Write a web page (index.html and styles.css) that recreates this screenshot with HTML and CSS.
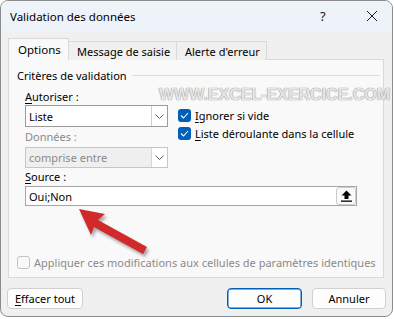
FILE: index.html
```html
<!DOCTYPE html>
<html lang="fr">
<head>
<meta charset="utf-8">
<title>Validation des données</title>
<link rel="stylesheet" href="styles.css">
</head>
<body>
<div class="window">
  <div class="titlebar">
    <span class="title">Validation des données</span>
    <span class="help">?</span>
    <svg class="close" width="12" height="12" viewBox="0 0 12 12"><path d="M1 1 L11 11 M11 1 L1 11" stroke="#1a1a1a" stroke-width="1" fill="none"/></svg>
  </div>
  <div class="body">
    <div class="tabs">
      <div class="tab active">Options</div>
      <div class="tab">Message de saisie</div>
      <div class="tab">Alerte d'erreur</div>
    </div>
    <div class="panel">
      <div class="group-head"><span>Critères de validation</span><span class="rule"></span></div>
      <div class="criteria">
        <div class="left-col">
          <div class="label"><u>A</u>utoriser :</div>
          <div class="select">
            <span class="select-text">Liste</span>
            <span class="select-btn"><svg width="9" height="5" viewBox="0 0 9 5"><path d="M0.5 0.5 L4.5 4.5 L8.5 0.5" stroke="#606060" fill="none" stroke-width="1"/></svg></span>
          </div>
          <div class="label disabled">Données :</div>
          <div class="select off">
            <span class="select-text">comprise entre</span>
            <span class="select-btn"><svg width="9" height="5" viewBox="0 0 9 5"><path d="M0.5 0.5 L4.5 4.5 L8.5 0.5" stroke="#606060" fill="none" stroke-width="1"/></svg></span>
          </div>
        </div>
        <div class="right-col">
          <div class="check-row"><span class="check on"><svg width="9" height="7" viewBox="0 0 9 7"><path d="M1 3.5 L3.5 6 L8 1" stroke="#fff" stroke-width="1.1" fill="none"/></svg></span><span><u>I</u>gnorer si vide</span></div>
          <div class="check-row"><span class="check on"><svg width="9" height="7" viewBox="0 0 9 7"><path d="M1 3.5 L3.5 6 L8 1" stroke="#fff" stroke-width="1.1" fill="none"/></svg></span><span><u>L</u>iste déroulante dans la cellule</span></div>
        </div>
      </div>
      <div class="label src-label"><u>S</u>ource :</div>
      <div class="source">
        <span class="source-text">Oui;Non</span>
        <span class="ref-btn"><svg width="11" height="12" viewBox="0 0 11 12"><path d="M5.5 0.5 L10.5 5.5 L7.5 5.5 L7.5 9 L3.5 9 L3.5 5.5 L0.5 5.5 Z" fill="#000"/><rect x="0" y="10.5" width="11" height="1.3" fill="#000"/></svg></span>
      </div>
      <div class="apply-row"><span class="check off"></span><span>Appliquer ces modifications aux cellules de paramètres identiques</span></div>
    </div>
    <div class="buttons">
      <button class="btn clear"><u>E</u>ffacer tout</button>
      <span class="spacer"></span>
      <button class="btn ok">OK</button>
      <button class="btn cancel">Annuler</button>
    </div>
  </div>
  <div class="watermark">WWW.EXCEL-EXERCICE.COM</div>
  <svg class="arrow" width="100" height="60" viewBox="0 0 100 60">
    <defs><filter id="sh" x="-20%" y="-20%" width="140%" height="160%"><feGaussianBlur stdDeviation="1.4"/></filter></defs>
    <g transform="translate(2,3)" filter="url(#sh)" opacity="0.45">
      <path d="M8 8 L34 13 L27 19 L76 46 L72 53 L23 26 L20 34 Z" fill="#444"/>
    </g>
    <path d="M8 8 L34 13 L27 19 L76 46 L72 53 L23 26 L20 34 Z" fill="#d22a2a"/>
  </svg>
</div>
</body>
</html>
```
FILE: styles.css
```css
* { box-sizing: border-box; }
html, body { margin: 0; padding: 0; background: #ffffff; }
body {
  width: 394px;
  height: 319px;
  font-family: "Noto Sans", "Open Sans", sans-serif;
  font-size: 11px;
  color: #000;
  white-space: nowrap;
}
u { text-decoration: underline; text-underline-offset: 2px; }
.window {
  position: relative;
  width: 393px;
  height: 317px;
  border: 1px solid #8c8c8c;
  border-radius: 8px;
  background: #f0f0f0;
  overflow: hidden;
  display: flex;
  flex-direction: column;
}
.titlebar {
  height: 30px;
  background: #eef3f9;
  display: flex;
  align-items: center;
  padding-left: 9px;
  flex: none;
}
.title { flex: 1; font-size: 11.5px; }
.help { width: 12px; margin-right: 34px; font-size: 13px; color: #1a1a1a; }
.close { margin-right: 14px; }
.body {
  flex: 1;
  padding: 7px 0 0 7px;
  display: flex;
  flex-direction: column;
}
.tabs {
  display: flex;
  align-items: flex-end;
  height: 22px;
  position: relative;
  z-index: 1;
}
.tab {
  height: 19px;
  border: 1px solid #d9d9d9;
  border-bottom: none;
  border-left: none;
  padding: 0 8px;
  display: flex;
  align-items: center;
  background: #f0f0f0;
  line-height: 1;
}
.tab.active {
  height: 22px;
  border-left: 1px solid #d9d9d9;
  background: #f9f9f9;
  padding: 0 9px 0 9px;
  width: 61px;
  font-size: 11.5px;
}
.tab:nth-child(2) { width: 108px; }
.tab:nth-child(3) { width: 90px; }
.panel {
  margin-top: -1px;
  width: 376px;
  height: 219px;
  border: 1px solid #d9d9d9;
  background: #f9f9f9;
  display: flex;
  flex-direction: column;
  padding: 7px 0 0 8px;
}
.group-head {
  height: 16px;
  display: flex;
  align-items: center;
}
.group-head .rule {
  flex: none;
  width: 248px;
  margin-left: 5px;
  height: 1px;
  background: #dddddd;
}
.criteria {
  display: flex;
  padding-left: 8px;
  margin-top: 6px;
}
.left-col { width: 143px; display: flex; flex-direction: column; }
.label { height: 16px; line-height: 16px; }
.label.disabled { color: #8a8a8a; margin-top: 2px; }
.select {
  height: 22px;
  border: 1px solid #9a9a9a;
  background: #ffffff;
  display: flex;
  align-items: stretch;
}
.select.off {
  height: 21px;
  margin-top: 2px;
  border-color: #c6c6c6;
  background: #efefef;
  color: #8a8a8a;
}
.select-text { flex: 1; padding-left: 3px; display: flex; align-items: center; }
.select-btn {
  width: 16px;
  border-left: 1px solid #cfcfcf;
  display: flex;
  align-items: center;
  justify-content: center;
  background: #ffffff;
}
.select.off .select-btn { border-left-color: #d6d6d6; }
.right-col { margin-left: 10px; padding-top: 17px; }
.check-row {
  height: 18px;
  display: flex;
  align-items: center;
  gap: 4px;
}
.check {
  width: 13px;
  height: 13px;
  border-radius: 3px;
  display: flex;
  align-items: center;
  justify-content: center;
  flex: none;
}
.check.on { background: #005fb8; }
.check.off { border: 1px solid #c2c2c2; background: #f9f9f9; }
.src-label { margin-left: 8px; margin-top: 1px; }
.source {
  margin-left: 8px;
  margin-top: 1px;
  width: 332px;
  height: 20px;
  border: 1px solid #a6a6a6;
  background: #ffffff;
  display: flex;
  align-items: center;
}
.source-text { flex: 1; padding-left: 3px; }
.ref-btn {
  width: 20px;
  height: 18px;
  border: 1px solid #cccccc;
  border-radius: 3px;
  background: #fafafa;
  display: flex;
  align-items: center;
  justify-content: center;
}
.apply-row {
  margin-top: auto;
  margin-bottom: 8px;
  display: flex;
  align-items: center;
  gap: 4px;
  color: #8a8a8a;
  height: 14px;
}
.buttons {
  display: flex;
  margin-top: 10px;
  padding-right: 6px;
}
.spacer { flex: 1; }
.btn {
  font-family: "Noto Sans", "Open Sans", sans-serif;
  font-size: 11px;
  height: 21px;
  border: 1px solid #d0d0d0;
  border-radius: 4px;
  background: #fdfdfd;
  color: #000;
  padding: 0;
  line-height: 1;
}
.btn.clear { width: 76px; margin-left: -1px; }
.btn.ok { width: 75px; border: 1px solid #005fb8; box-shadow: inset 0 0 0 0.5px #005fb8; }
.btn.cancel { width: 74px; margin-left: 10px; }
.watermark {
  position: absolute;
  left: 158px;
  top: 85px;
  font-family: "Liberation Sans", Arial, sans-serif;
  font-weight: bold;
  font-size: 16px;
  color: #e6e6e6;
  text-shadow: 0 0 1px #8f8f8f, 0 0 1px #8f8f8f;
  letter-spacing: 0;
  white-space: nowrap;
}
.arrow {
  position: absolute;
  left: 70px;
  top: 200px;
}
```
